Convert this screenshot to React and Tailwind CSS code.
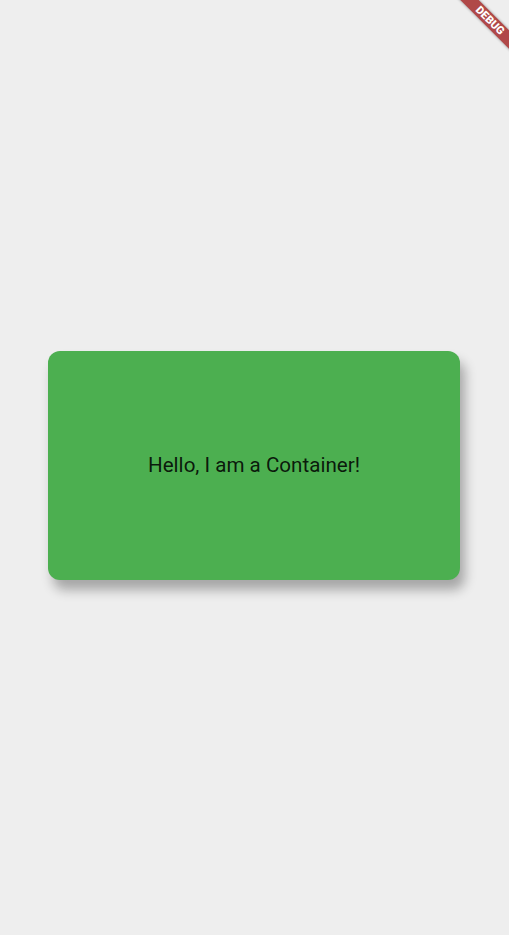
export default function App() {
  return (
    <div className="relative flex h-[935px] w-full items-center justify-center overflow-hidden bg-[#eeeeee] pb-[5px] pr-[1px] font-['Roboto',sans-serif]">
      <div className="flex h-[229px] w-[412px] items-center justify-center rounded-[12px] bg-[#4caf50] shadow-[5px_10px_12px_rgba(0,0,0,0.3)]">
        <p className="text-[20.6px] leading-none text-black/[0.87]">Hello, I am a Container!</p>
      </div>

      {/* debug ribbon */}
      <div className="absolute left-[429.5px] top-[14px] flex h-[13px] w-[120px] rotate-45 items-center justify-center bg-[#b04848] shadow-[0_0_3px_rgba(0,0,0,0.4)]">
        <span className="text-[11px] font-black leading-none text-white">DEBUG</span>
      </div>
    </div>
  )
}
